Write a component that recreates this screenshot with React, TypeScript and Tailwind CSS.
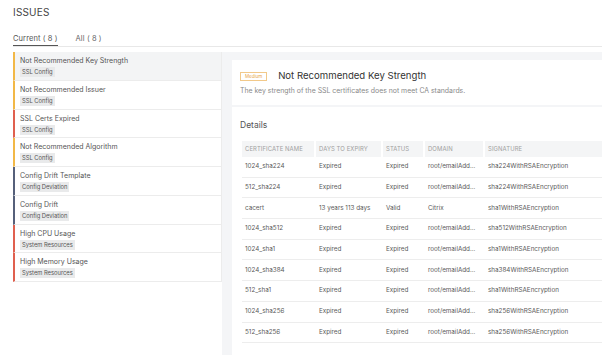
import React from "react";

const issues = [
  { title: "Not Recommended Key Strength", tag: "SSL Config", color: "border-l-[#f2b847]", active: true },
  { title: "Not Recommended Issuer", tag: "SSL Config", color: "border-l-[#f2b847]" },
  { title: "SSL Certs Expired", tag: "SSL Config", color: "border-l-[#e0604f]" },
  { title: "Not Recommended Algorithm", tag: "SSL Config", color: "border-l-[#f2b847]" },
  { title: "Config Drift Template", tag: "Config Deviation", color: "border-l-[#56607a]" },
  { title: "Config Drift", tag: "Config Deviation", color: "border-l-[#56607a]" },
  { title: "High CPU Usage", tag: "System Resources", color: "border-l-[#e0604f]" },
  { title: "High Memory Usage", tag: "System Resources", color: "border-l-[#e0604f]" },
];

const rows = [
  ["1024_sha224", "Expired", "Expired", "root/emailAdd...", "sha224WithRSAEncryption"],
  ["512_sha224", "Expired", "Expired", "root/emailAdd...", "sha224WithRSAEncryption"],
  ["cacert", "13 years 113 days", "Valid", "Citrix", "sha1WithRSAEncryption"],
  ["1024_sha512", "Expired", "Expired", "root/emailAdd...", "sha512WithRSAEncryption"],
  ["1024_sha1", "Expired", "Expired", "root/emailAdd...", "sha1WithRSAEncryption"],
  ["1024_sha384", "Expired", "Expired", "root/emailAdd...", "sha384WithRSAEncryption"],
  ["512_sha1", "Expired", "Expired", "root/emailAdd...", "sha1WithRSAEncryption"],
  ["1024_sha256", "Expired", "Expired", "root/emailAdd...", "sha256WithRSAEncryption"],
  ["512_sha256", "Expired", "Expired", "root/emailAdd...", "sha256WithRSAEncryption"],
];

const headers = ["CERTIFICATE NAME", "DAYS TO EXPIRY", "STATUS", "DOMAIN", "SIGNATURE"];
const widths = ["w-[72px]", "w-[65px]", "w-[40px]", "w-[58px]", "w-[140px]"];

export default function App() {
  return (
    <div
      className="w-[602px] h-[355px] bg-white overflow-hidden text-[#333]"
      style={{ fontFamily: "Inter, 'Noto Sans', sans-serif" }}
    >
      <div className="pl-[13px] pt-[5px] h-[29px] text-[10px] leading-[14px] text-[#444] tracking-[0.2px]">ISSUES</div>
      <div className="ml-[13px] flex items-end h-[18px] border-b border-[#e8e8e8] text-[7.5px] text-[#555]">
        <div className="h-[17px] border-b-[1.5px] border-[#555] leading-[12px] pt-[4px] whitespace-nowrap tracking-[0.1px]">Current ( 8 )</div>
        <div className="ml-[18px] h-[17px] leading-[12px] pt-[4px] text-[#666] whitespace-nowrap tracking-[0.1px]">All ( 8 )</div>
      </div>
      <div className="flex mt-[5px] h-[303px]">
        <div className="ml-[13px] w-[209px] flex flex-col">
          {issues.map((it, i) => (
            <div
              key={i}
              className={`h-[28.75px] border-l-2 ${it.color} border-b border-b-[#ececec] border-r border-r-[#ececec] pl-[5px] pt-[4px] flex flex-col items-start ${it.active ? "bg-[#f3f4f5]" : "bg-white"}`}
            >
              <div className="text-[7px] leading-[10px] text-[#555] whitespace-nowrap">{it.title}</div>
              <div className="mt-[1px] bg-[#e9eaeb] px-[2px] text-[5.8px] leading-[10px] text-[#555] whitespace-nowrap">{it.tag}</div>
            </div>
          ))}
        </div>
        <div className="flex-1 bg-[#f4f5f7] pl-[10px] pt-[8px] flex flex-col gap-[2px] overflow-hidden">
          <div className="bg-white h-[45px] pl-[8px] pt-[9px]">
            <div className="flex items-center">
              <div className="border border-[#f2c98a] text-[#e8a64a] text-[4.5px] leading-[7px] px-[4px] h-[9px] flex items-center">Medium</div>
              <div className="ml-[11px] text-[9.6px] leading-[14px] text-[#333]">Not Recommended Key Strength</div>
            </div>
            <div className="mt-[3px] text-[6.9px] leading-[10px] text-[#8a8a8a] whitespace-nowrap">The key strength of the SSL certificates does not meet CA standards.</div>
          </div>
          <div className="bg-white flex-1 pl-[8px] pt-[12px]">
            <div className="text-[8.5px] leading-[12px] text-[#555]">Details</div>
            <div className="mt-[10px] w-[400px] pl-[2px]">
              <div className="flex gap-[2px] h-[16px]">
                {headers.map((h, i) => (
                  <div key={i} className={`${widths[i]} bg-[#f4f5f6] pl-[3px] text-[5.9px] leading-[16px] text-[#a0a0a0] tracking-[0.1px] whitespace-nowrap`}>{h}</div>
                ))}
              </div>
              {rows.map((r, ri) => (
                <div key={ri} className="flex gap-[2px] h-[20.7px] border-b border-[#ededed] items-center">
                  {r.map((c, ci) => (
                    <div key={ci} className={`${widths[ci]} pl-[3px] text-[6.3px] text-[#5a5a5a] whitespace-nowrap`}>{c}</div>
                  ))}
                </div>
              ))}
            </div>
          </div>
        </div>
      </div>
    </div>
  );
}
